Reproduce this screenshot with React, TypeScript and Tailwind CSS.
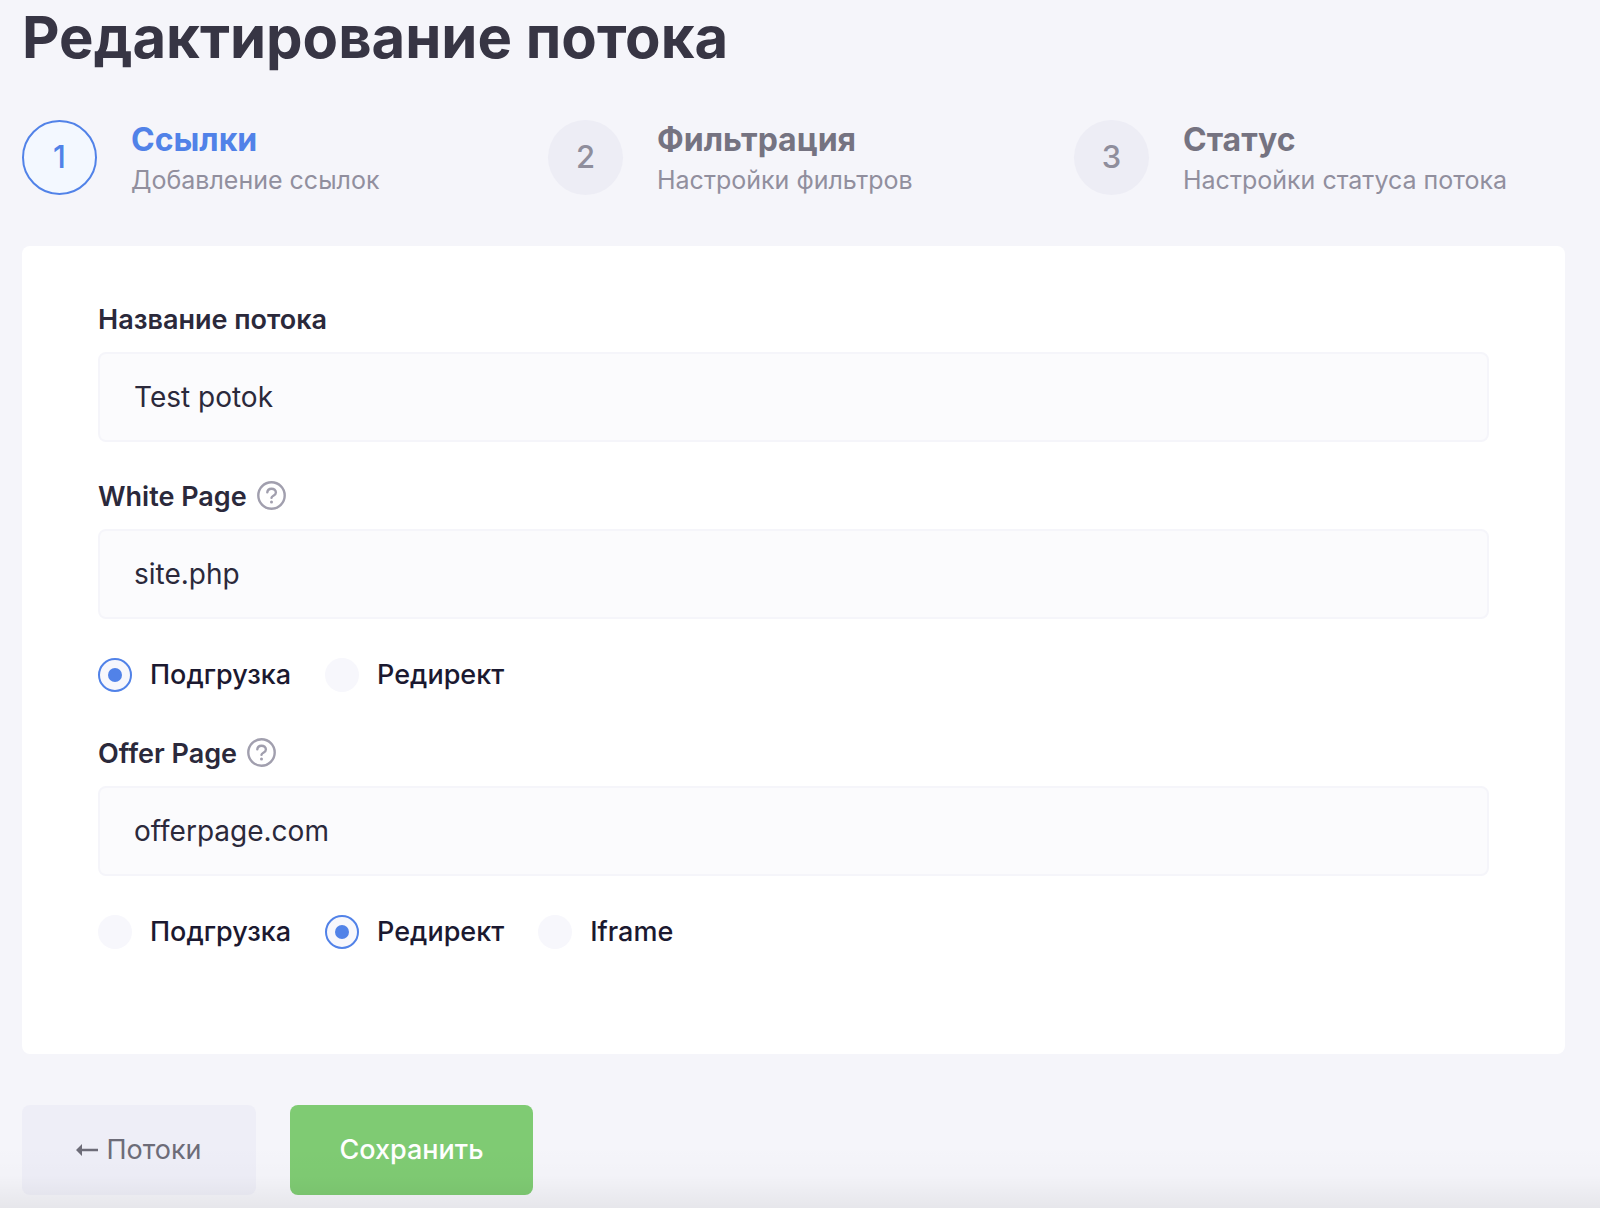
import { useState } from "react";
import { clsx } from "clsx";

interface Step {
  title: string;
  description: string;
}

interface RadioGroupProps {
  name: string;
  legend: string;
  options: string[];
  value: string;
  onChange: (value: string) => void;
}

interface TextFieldProps {
  id: string;
  label: string;
  hint?: string;
  value: string;
  onChange: (value: string) => void;
}

const steps: Step[] = [
  { title: "Ссылки", description: "Добавление ссылок" },
  { title: "Фильтрация", description: "Настройки фильтров" },
  { title: "Статус", description: "Настройки статуса потока" },
];

function HelpIcon() {
  return (
    <svg
      viewBox="0 0 29 29"
      fill="none"
      stroke="currentColor"
      strokeWidth="2.4"
      strokeLinecap="round"
      className="size-[29px]"
      aria-hidden="true"
    >
      <circle cx="14.5" cy="14.5" r="13.2" />
      <path d="M10.3 11.4c.2-2.4 2-3.7 4.2-3.7 2.5 0 4.4 1.5 4.4 3.8 0 3.4-4.2 3.1-4.4 5.3" />
      <circle cx="14.5" cy="20.9" r="1.5" fill="currentColor" stroke="none" />
    </svg>
  );
}

function TextField({ id, label, hint, value, onChange }: TextFieldProps) {
  return (
    <div>
      <div className="mb-4 flex h-8 items-start gap-[10px]">
        <label htmlFor={id} className="text-[27px] leading-8 font-semibold text-[#2b293b]">
          {label}
        </label>
        {hint && (
          <button type="button" aria-label={hint} className="text-[#a19fae]">
            <HelpIcon />
          </button>
        )}
      </div>
      <input
        id={id}
        type="text"
        value={value}
        onChange={(event) => onChange(event.target.value)}
        className="h-[90px] w-full rounded-lg border-2 border-[#f5f5fa] bg-[#fbfbfd] px-[34px] text-[28px] text-[#2b293b] outline-none"
      />
    </div>
  );
}

function RadioGroup({ name, legend, options, value, onChange }: RadioGroupProps) {
  return (
    <div role="radiogroup" aria-label={legend} className="mt-[39px] flex gap-[34px]">
      {options.map((option) => (
        <label key={option} className="flex items-center gap-[18px]">
          <input
            type="radio"
            name={name}
            checked={value === option}
            onChange={() => onChange(option)}
            className="grid size-[34px] appearance-none place-items-center rounded-full bg-[#f7f7fc] checked:border-2 checked:border-[#5182e8] checked:before:size-[14px] checked:before:rounded-full checked:before:bg-[#5182e8] checked:before:content-['']"
          />
          <span className="text-[27px] leading-[34px] font-medium text-[#1b1930]">
            {option}
          </span>
        </label>
      ))}
    </div>
  );
}

export default function App() {
  const [name, setName] = useState("Test potok");
  const [whitePage, setWhitePage] = useState("site.php");
  const [whiteMode, setWhiteMode] = useState("Подгрузка");
  const [offerPage, setOfferPage] = useState("offerpage.com");
  const [offerMode, setOfferMode] = useState("Редирект");
  const current = 0;

  return (
    <div className="relative min-h-screen bg-[#f5f5fa] pb-[13px] pl-[22px] font-['Inter',sans-serif]">
      <h1 className="pt-1 text-[58px] leading-[66px] font-bold text-[#373544]">
        Редактирование потока
      </h1>

      <ol className="mt-[50px] grid grid-cols-3">
        {steps.map((step, index) => (
          <li key={step.title} className="flex items-start gap-[34px]">
            <span
              className={clsx(
                "flex size-[75px] shrink-0 items-center justify-center rounded-full text-[31px] font-medium",
                index === current
                  ? "border-2 border-[#5182e8] bg-[#f3f8ff] text-[#5182e8]"
                  : "bg-[#ededf5] text-[#8f8e9c]",
              )}
            >
              {index + 1}
            </span>
            <div>
              <h2
                className={clsx(
                  "text-[32px] leading-10 font-bold",
                  index === current ? "text-[#5182e8]" : "text-[#757381]",
                )}
              >
                {step.title}
              </h2>
              <p className="text-[25px] leading-10 text-[#918f9e]">{step.description}</p>
            </div>
          </li>
        ))}
      </ol>

      <form className="mr-[35px]" onSubmit={(event) => event.preventDefault()}>
        <div className="mt-[46px] rounded-lg bg-white px-[76px] pt-[58px] pb-[105px]">
          <TextField id="name" label="Название потока" value={name} onChange={setName} />

          <div className="mt-[39px]">
            <TextField
              id="white-page"
              label="White Page"
              hint="White Page"
              value={whitePage}
              onChange={setWhitePage}
            />
            <RadioGroup
              name="white-mode"
              legend="White Page"
              options={["Подгрузка", "Редирект"]}
              value={whiteMode}
              onChange={setWhiteMode}
            />
          </div>

          <div className="mt-[46px]">
            <TextField
              id="offer-page"
              label="Offer Page"
              hint="Offer Page"
              value={offerPage}
              onChange={setOfferPage}
            />
            <RadioGroup
              name="offer-mode"
              legend="Offer Page"
              options={["Подгрузка", "Редирект", "Iframe"]}
              value={offerMode}
              onChange={setOfferMode}
            />
          </div>
        </div>

        <div className="mt-[51px] flex gap-[34px]">
          <button
            type="button"
            className="flex h-[90px] w-[234px] items-center justify-center gap-2 rounded-lg bg-[#eeeef7] text-[27px] text-[#6d6c78]"
          >
            <svg viewBox="0 0 22 12" className="h-3 w-[22px]" fill="currentColor" aria-hidden="true">
              <path d="M0 6 6 0v4.8h16v2.4H6V12z" />
            </svg>
            Потоки
          </button>
          <button
            type="submit"
            className="h-[90px] w-[243px] rounded-lg bg-[#7fcb73] text-[27px] font-medium text-white"
          >
            Сохранить
          </button>
        </div>
      </form>

      <div className="pointer-events-none absolute inset-x-0 bottom-0 h-16 bg-linear-to-b from-transparent via-black/1 to-black/6" />
    </div>
  );
}
